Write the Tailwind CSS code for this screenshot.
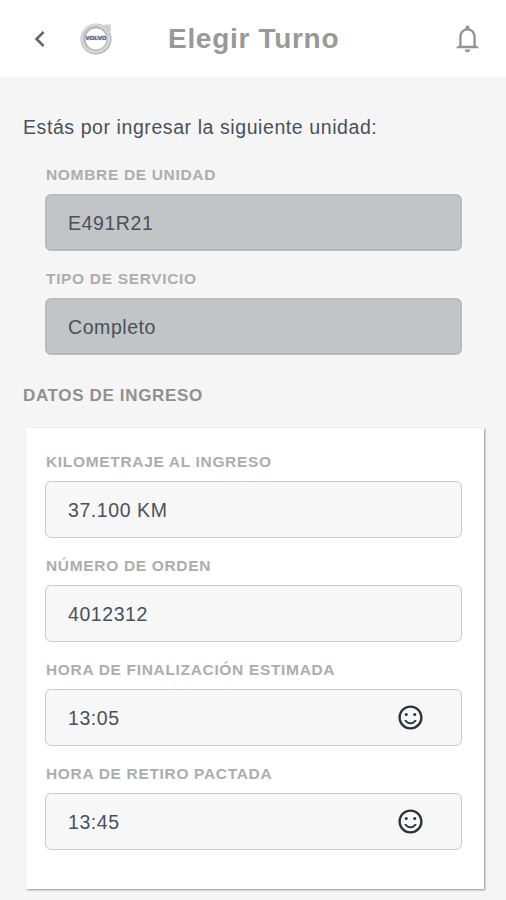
<!DOCTYPE html>
<html lang="es">
<head>
  <meta charset="UTF-8" />
  <meta name="viewport" content="width=device-width, initial-scale=1.0" />
  <title>Elegir Turno</title>
  <script src="https://cdn.jsdelivr.net/npm/@tailwindcss/browser@4"></script>
</head>
<body class="bg-[#f5f5f5] h-[900px] overflow-hidden font-['Liberation_Sans',Arial,sans-serif] text-[#47525a]">

  <!-- Header -->
  <header class="bg-white h-[77px] flex items-center pl-6 pr-[22px]">
    <button aria-label="Volver">
      <svg class="w-[32px] h-[32px] fill-[#666]" viewBox="0 0 24 24"><path d="M15.41 7.41 14 6l-6 6 6 6 1.41-1.41L10.83 12z"/></svg>
    </button>
    <svg class="w-9 h-9 ml-[22px] mb-1" viewBox="0 0 36 36">
      <path d="M25.500 5.500h7.500v7.500l-2.500-2.200-3 2.700-2.500-2.500 3-3z" fill="#d2d2d2" />
      <circle cx="18" cy="20" r="13.300" fill="none" stroke="#bcbcbc" stroke-width="4.600" />
      <circle cx="17.500" cy="19.500" r="13.500" fill="none" stroke="#dadada" stroke-width="2" />
      <circle cx="18" cy="20" r="11" fill="none" stroke="#a0a0a0" stroke-width="0.700" />
      <rect x="6.500" y="16.700" width="23" height="4.400" fill="#c3cad6" />
      <text x="7.500" y="20.600" textLength="21" lengthAdjust="spacingAndGlyphs" font-size="4.800" font-weight="700" fill="#405684">VOLVO</text>
    </svg>
    <h1 class="ml-[54px] text-[28px] leading-8 font-bold tracking-[0.7px] text-[#999]">Elegir Turno</h1>
    <button class="ml-auto" aria-label="Notificaciones">
      <svg class="w-[33px] h-[33px] fill-[#939393]" viewBox="0 0 24 24"><path d="M12 22c1.100 0 2-.9 2-2h-4c0 1.100.9 2 2 2zm6-5v-6c0-3.070-1.630-5.640-4.500-6.320V4c0-.83-.67-1.500-1.500-1.500s-1.500.67-1.500 1.500v.68C7.640 5.360 6 7.920 6 11v6l-2 1.200v.8h16v-.8L18 17zm-1.700.2H7.700V11c0-2.700 1.710-4.800 4.300-4.800s4.300 2.100 4.300 4.800v6.200z"/></svg>
    </button>
  </header>

  <main class="pt-[38px] pl-[23px] pr-[21px]">
    <p class="text-[19.5px] leading-6 tracking-[0.58px]">Estás por ingresar la siguiente unidad:</p>

    <!-- Unidad -->
    <section class="pt-[26px] pl-[22px] pr-[23px]">
      <h2 class="h-[29px] pl-px text-[15.5px] leading-5 font-bold tracking-[0.67px] text-[#adadad]">NOMBRE DE UNIDAD</h2>
      <div class="h-[57px] flex items-center rounded-md border-2 border-[#b7b9ba] bg-[#c2c4c5] px-[21px] pt-0.5 text-[19.5px] tracking-[0.57px]">E491R21</div>
      <h2 class="h-[29px] mt-[18px] pl-px text-[15.5px] leading-5 font-bold tracking-[0.67px] text-[#adadad]">TIPO DE SERVICIO</h2>
      <div class="h-[57px] flex items-center rounded-md border-2 border-[#b7b9ba] bg-[#c2c4c5] px-[21px] pt-0.5 text-[19.5px] tracking-[0.57px]">Completo</div>
    </section>

    <h2 class="mt-[31px] text-[17px] leading-5 font-bold tracking-[0.65px] text-[#909090]">DATOS DE INGRESO</h2>

    <!-- Datos de ingreso -->
    <section class="mt-[22px] ml-[3px] mr-px h-[461px] bg-white pt-6 pl-[19px] pr-[22px] shadow-[1px_1px_2px_#8f8f8f]">
      <h3 class="h-[29px] pl-px text-[15.5px] leading-5 font-bold tracking-[0.67px] text-[#adadad]">KILOMETRAJE AL INGRESO</h3>
      <div class="h-[57px] flex items-center rounded-md border-[1.5px] border-[#cacaca] bg-[#f7f7f7] px-[22px] pt-0.5 text-[19.5px] tracking-[0.57px]">37.100 KM</div>
      <h3 class="h-[29px] mt-[18px] pl-px text-[15.5px] leading-5 font-bold tracking-[0.67px] text-[#adadad]">NÚMERO DE ORDEN</h3>
      <div class="h-[57px] flex items-center rounded-md border-[1.5px] border-[#cacaca] bg-[#f7f7f7] px-[22px] pt-0.5 text-[19.5px] tracking-[0.57px]">4012312</div>
      <h3 class="h-[29px] mt-[18px] pl-px text-[15.5px] leading-5 font-bold tracking-[0.67px] text-[#adadad]">HORA DE FINALIZACIÓN ESTIMADA</h3>
      <div class="h-[57px] flex items-center justify-between rounded-md border-[1.5px] border-[#cacaca] bg-[#f7f7f7] pl-[22px] pr-9 text-[19.5px] tracking-[0.57px]">
        <span class="pt-0.5">13:05</span>
        <svg class="w-[29px] h-[29px] fill-[#24343c]" viewBox="0 0 24 24"><circle cx="15.500" cy="9.500" r="1.250"/><circle cx="8.500" cy="9.500" r="1.250"/><path d="M12 16c-1.480 0-2.750-.81-3.450-2H6.880c.8 2.050 2.790 3.500 5.120 3.500s4.320-1.450 5.120-3.500h-1.670c-.7 1.190-1.970 2-3.450 2zm-.01-14C6.470 2 2 6.480 2 12s4.470 10 9.990 10C17.520 22 22 17.520 22 12S17.520 2 11.990 2zM12 20c-4.420 0-8-3.580-8-8s3.580-8 8-8 8 3.580 8 8-3.580 8-8 8z"/></svg>
      </div>
      <h3 class="h-[29px] mt-[18px] pl-px text-[15.5px] leading-5 font-bold tracking-[0.67px] text-[#adadad]">HORA DE RETIRO PACTADA</h3>
      <div class="h-[57px] flex items-center justify-between rounded-md border-[1.5px] border-[#cacaca] bg-[#f7f7f7] pl-[22px] pr-9 text-[19.5px] tracking-[0.57px]">
        <span class="pt-0.5">13:45</span>
        <svg class="w-[29px] h-[29px] fill-[#24343c]" viewBox="0 0 24 24"><circle cx="15.500" cy="9.500" r="1.250"/><circle cx="8.500" cy="9.500" r="1.250"/><path d="M12 16c-1.480 0-2.750-.81-3.450-2H6.880c.8 2.050 2.790 3.500 5.120 3.500s4.320-1.450 5.120-3.500h-1.670c-.7 1.190-1.970 2-3.450 2zm-.01-14C6.470 2 2 6.480 2 12s4.470 10 9.990 10C17.520 22 22 17.520 22 12S17.520 2 11.990 2zM12 20c-4.420 0-8-3.580-8-8s3.580-8 8-8 8 3.580 8 8-3.580 8-8 8z"/></svg>
      </div>
    </section>
  </main>

</body>
</html>
